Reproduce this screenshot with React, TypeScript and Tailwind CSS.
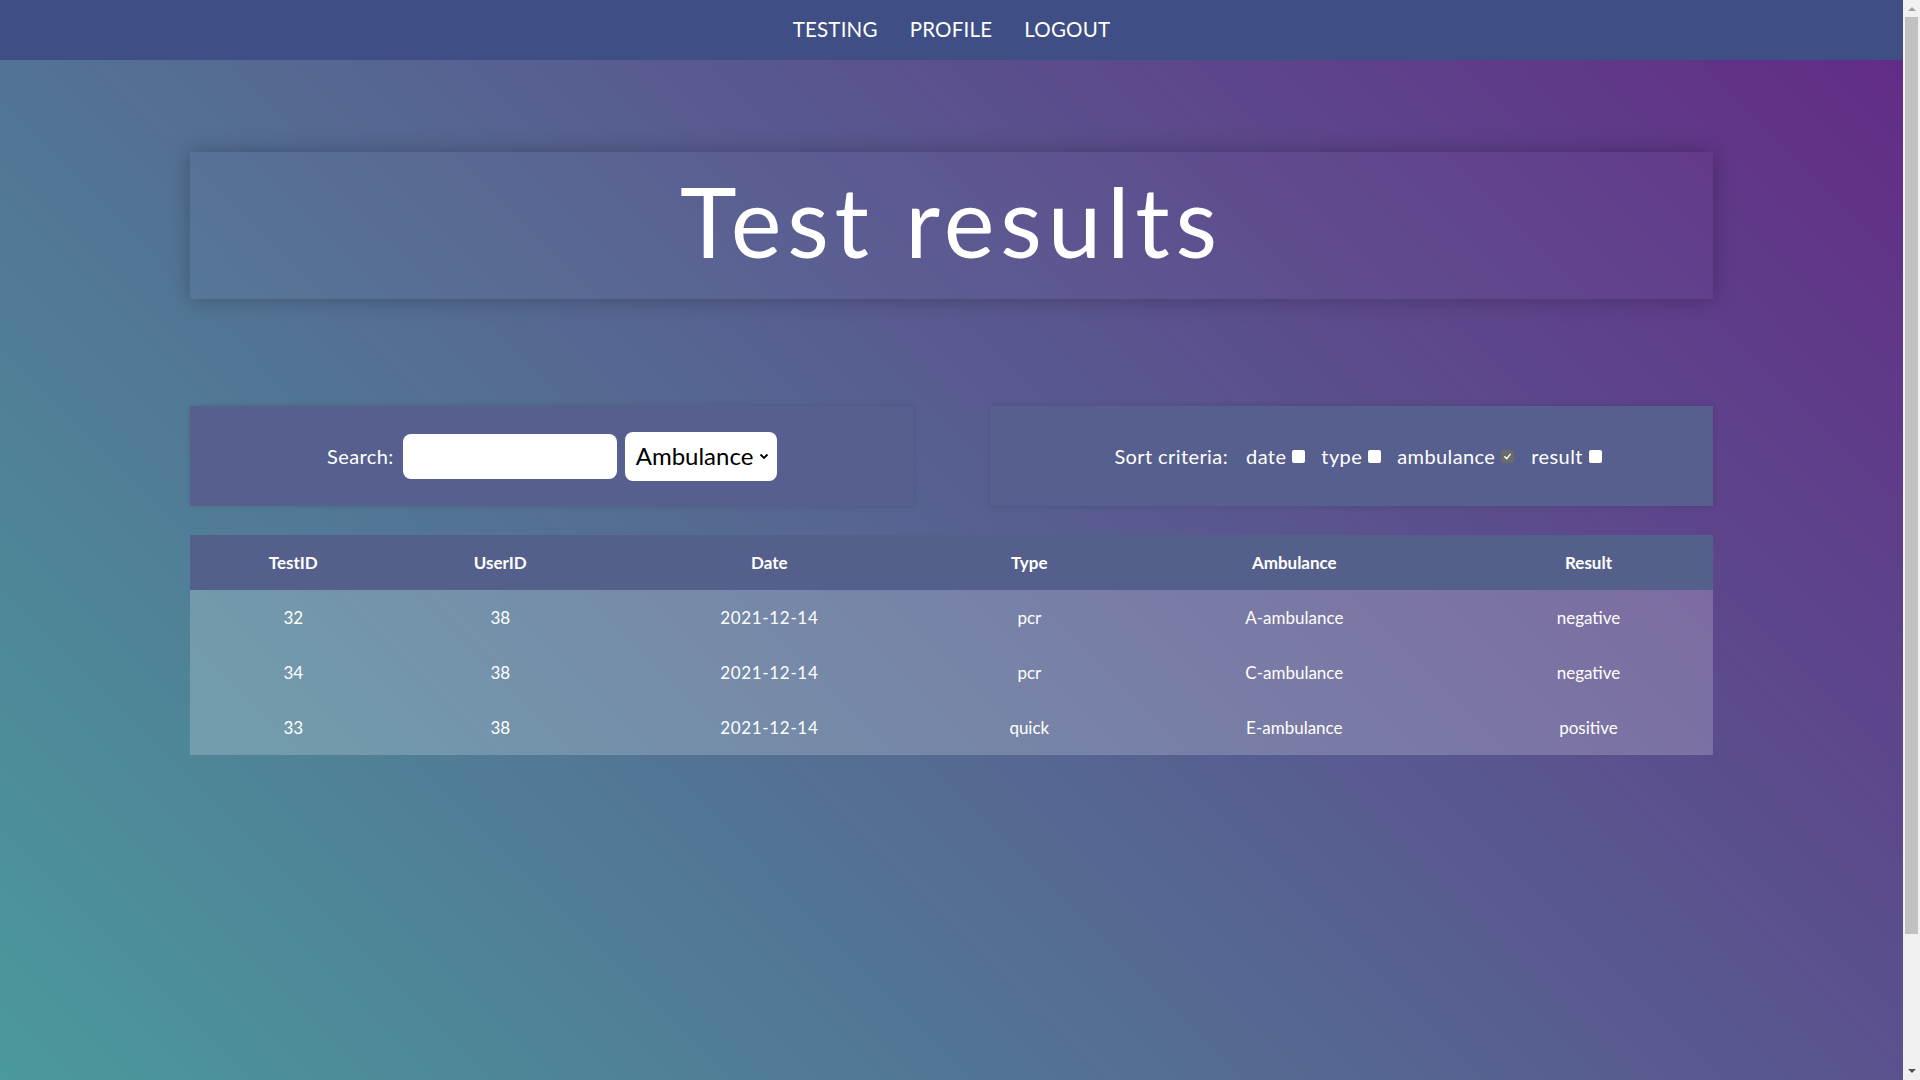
import React from "react";

const rows = [
  { id: "32", user: "38", date: "2021-12-14", type: "pcr", amb: "A-ambulance", res: "negative" },
  { id: "34", user: "38", date: "2021-12-14", type: "pcr", amb: "C-ambulance", res: "negative" },
  { id: "33", user: "38", date: "2021-12-14", type: "quick", amb: "E-ambulance", res: "positive" },
];

function Box({ checked }: { checked?: boolean }) {
  if (checked) {
    return (
      <span className="inline-flex w-[13px] h-[13px] bg-[#6b6b6b] rounded-[2px] items-center justify-center">
        <svg width="9" height="9" viewBox="0 0 10 10">
          <path d="M2 5.2 L4.2 7.4 L8 2.6" stroke="white" strokeWidth="1.6" fill="none" strokeLinecap="round" strokeLinejoin="round" />
        </svg>
      </span>
    );
  }
  return <span className="inline-block w-[13px] h-[13px] bg-white rounded-[2px]" />;
}

function Scrollbar() {
  return (
    <div className="w-[17px] h-[1080px] bg-[#f1f1f1] flex flex-col items-center shrink-0">
      <div className="h-[17px] flex items-center justify-center">
        <svg width="8" height="5" viewBox="0 0 8 5"><path d="M0 5 L4 1 L8 5 Z" fill="#a3a3a3" /></svg>
      </div>
      <div className="w-[13px] h-[917px] bg-[#c1c1c1]" />
      <div className="flex-1" />
      <div className="h-[17px] flex items-center justify-center">
        <svg width="8" height="5" viewBox="0 0 8 5"><path d="M0 0 L4 4 L8 0 Z" fill="#505050" /></svg>
      </div>
    </div>
  );
}

export default function App() {
  return (
    <div className="flex h-[1080px] overflow-hidden">
      <div className="flex-1 h-[1080px] overflow-hidden">
        <div className="min-h-[1232px] bg-[linear-gradient(45deg,#499f9d,#632a86)] font-['Lato',sans-serif] text-white">
          <nav className="h-[60px] bg-[#3f4e84] flex justify-center items-center gap-[32px] text-[20.5px] tracking-[0.01em] pb-[2px]">
            <a className="cursor-pointer">TESTING</a>
            <a className="cursor-pointer">PROFILE</a>
            <a className="cursor-pointer">LOGOUT</a>
          </nav>
          <div className="w-[80%] mx-auto pt-[92px]">
            <div className="h-[147px] flex items-center justify-center pb-[10px] bg-white/[0.02] shadow-[0_0_20px_rgba(0,0,0,0.25)]">
              <h1 className="text-[96px] leading-none tracking-[0.06em] font-normal">Test results</h1>
            </div>
            <div className="mt-[107px] flex justify-between">
              <div className="w-[47.5%] h-[100px] bg-[#565f8e] shadow-[0_0_6px_rgba(0,0,0,0.12)] flex items-center justify-center">
                <span className="text-[20px] mr-[9px] tracking-[0.02em]">Search:</span>
                <input className="w-[214px] h-[45px] bg-white rounded-[8px] outline-none text-black px-2 text-[20px]" />
                <div className="ml-[8px] w-[152px] h-[49px] bg-white rounded-[8px] flex items-center justify-between pl-[11px] pr-[8px] text-black text-[24px]">
                  <span>Ambulance</span>
                  <svg width="10" height="7" viewBox="0 0 10 7">
                    <path d="M1.5 1.5 L5 5 L8.5 1.5" stroke="black" strokeWidth="1.8" fill="none" />
                  </svg>
                </div>
              </div>
              <div className="w-[47.5%] h-[100px] bg-[#565f8e] shadow-[0_0_6px_rgba(0,0,0,0.12)] flex items-center justify-center text-[20px] tracking-[0.02em]">
                <div className="flex items-center ml-[14px]">
                  <span className="mr-[18px]">Sort criteria:</span>
                  <span className="mr-[6px]">date</span>
                  <Box />
                  <span className="ml-[16px] mr-[6px]">type</span>
                  <Box />
                  <span className="ml-[16px] mr-[6px]">ambulance</span>
                  <Box checked />
                  <span className="ml-[17px] mr-[6px]">result</span>
                  <Box />
                </div>
              </div>
            </div>
            <table className="mt-[29px] w-full table-fixed border-collapse text-[17px]">
              <colgroup>
                <col className="w-[206px]" />
                <col className="w-[208px]" />
                <col className="w-[330px]" />
                <col className="w-[190px]" />
                <col className="w-[340px]" />
                <col />
              </colgroup>
              <thead>
                <tr className="h-[55px] bg-[#555f8c]">
                  <th className="font-bold">TestID</th>
                  <th className="font-bold">UserID</th>
                  <th className="font-bold">Date</th>
                  <th className="font-bold">Type</th>
                  <th className="font-bold">Ambulance</th>
                  <th className="font-bold">Result</th>
                </tr>
              </thead>
              <tbody>
                {rows.map((r, i) => (
                  <tr key={i} className="h-[55px] bg-white/20 text-center">
                    <td>{r.id}</td>
                    <td>{r.user}</td>
                    <td className="tracking-[0.04em]">{r.date}</td>
                    <td>{r.type}</td>
                    <td>{r.amb}</td>
                    <td>{r.res}</td>
                  </tr>
                ))}
              </tbody>
            </table>
          </div>
        </div>
      </div>
      <Scrollbar />
    </div>
  );
}
